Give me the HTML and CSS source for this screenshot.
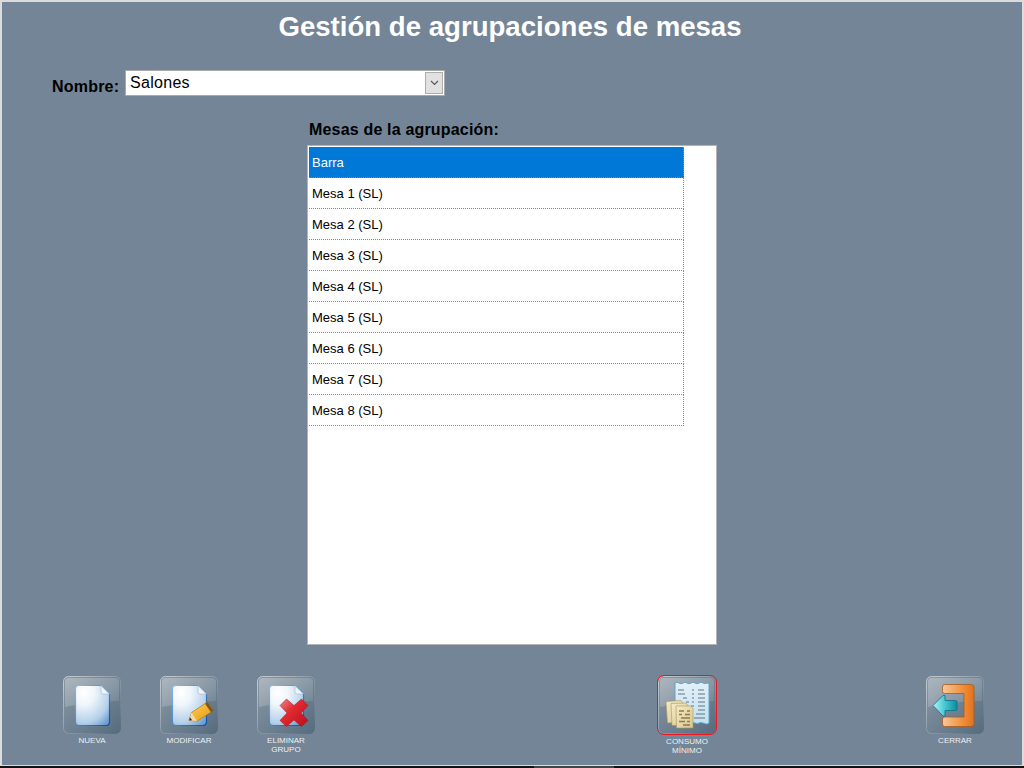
FILE: index.html
```html
<!DOCTYPE html>
<html lang="es">
<head>
<meta charset="utf-8">
<title>Gestión de agrupaciones de mesas</title>
<link rel="stylesheet" href="styles.css">
</head>
<body>
<svg class="defs" aria-hidden="true">
  <defs>
    <linearGradient id="baseG" x1="0" y1="0" x2="1" y2="1">
      <stop offset="0" stop-color="#8b98a3"/><stop offset=".6" stop-color="#6b7f90"/><stop offset="1" stop-color="#566c7e"/>
    </linearGradient>
    <linearGradient id="glossG" x1="0" y1="0" x2="1" y2="1">
      <stop offset="0" stop-color="#fff" stop-opacity=".3"/><stop offset="1" stop-color="#fff" stop-opacity=".08"/>
    </linearGradient>
    <linearGradient id="edgeG" x1="0" y1="0" x2="1" y2="1">
      <stop offset="0" stop-color="#c6ced4"/><stop offset=".55" stop-color="#8796a3"/><stop offset="1" stop-color="#56697a"/>
    </linearGradient>
    <radialGradient id="docG" cx=".25" cy=".18" r="1">
      <stop offset="0" stop-color="#fff"/><stop offset=".3" stop-color="#f0f6fb"/><stop offset=".75" stop-color="#b5d0ea"/><stop offset="1" stop-color="#6c9dd2"/>
    </radialGradient>
    <linearGradient id="docS" x1="0" y1="0" x2="1" y2="1">
      <stop offset="0" stop-color="#8fbbe6"/><stop offset="1" stop-color="#0f4fa0"/>
    </linearGradient>
    <linearGradient id="pencilG" x1="0" y1="0" x2="1" y2="1">
      <stop offset="0" stop-color="#fdd55a"/><stop offset="1" stop-color="#ea9410"/>
    </linearGradient>
    <linearGradient id="redG" x1="0" y1="0" x2="1" y2="1">
      <stop offset="0" stop-color="#f0858a"/><stop offset=".4" stop-color="#e02a30"/><stop offset="1" stop-color="#b90f18"/>
    </linearGradient>
    <linearGradient id="orangeG" x1="0" y1="0" x2="1" y2="0">
      <stop offset="0" stop-color="#f7c79b"/><stop offset=".6" stop-color="#f0933f"/><stop offset="1" stop-color="#e4701c"/>
    </linearGradient>
    <linearGradient id="arrowG" x1="0" y1="0" x2="1" y2="0">
      <stop offset="0" stop-color="#b2f3f7"/><stop offset=".5" stop-color="#45c6d2"/><stop offset="1" stop-color="#0d8c9c"/>
    </linearGradient>
    <linearGradient id="receiptG" x1="0" y1="0" x2="0" y2="1">
      <stop offset="0" stop-color="#e2f0f9"/><stop offset="1" stop-color="#c2e0f0"/>
    </linearGradient>
    <linearGradient id="paperG" x1="0" y1="0" x2="1" y2="1">
      <stop offset="0" stop-color="#f5ebc8"/><stop offset="1" stop-color="#d9c48c"/>
    </linearGradient>
    <symbol id="base" viewBox="0 0 58 58">
      <rect x=".5" y=".5" width="57" height="57" rx="5" fill="url(#baseG)" stroke="url(#edgeG)"/>
      <path d="M2 29V6a4 4 0 0 1 4-4h46a4 4 0 0 1 4 4v19Q28 25 2 31z" fill="url(#glossG)"/>
    </symbol>
    <symbol id="doc" viewBox="0 0 58 58">
      <path d="M16 9.500H38L46.500 18V46a3.500 3.500 0 0 1-3.500 3.500H16a3.500 3.500 0 0 1-3.500-3.500V13A3.500 3.500 0 0 1 16 9.500z" fill="url(#docG)" stroke="url(#docS)" stroke-width="1.200"/>
      <path d="M38 9.500V16a2 2 0 0 0 2 2h6.500z" fill="#eef4f8" stroke="#9fb9d0" stroke-width=".6"/>
    </symbol>
  </defs>
</svg>

<main class="frame">
  <h1 class="title">Gestión de agrupaciones de mesas</h1>

  <div class="name-row">
    <label class="name-label">Nombre:</label>
    <div class="select">
      <span class="select-value">Salones</span>
      <span class="select-arrow">
        <svg width="9" height="6" viewBox="0 0 9 6"><path d="M1 1l3.500 3.500L8 1" fill="none" stroke="#555" stroke-width="1.100"/></svg>
      </span>
    </div>
  </div>

  <section class="tables">
    <h2 class="tables-title">Mesas de la agrupación:</h2>
    <ul class="list">
      <li class="item selected">Barra</li>
      <li class="item">Mesa 1 (SL)</li>
      <li class="item">Mesa 2 (SL)</li>
      <li class="item">Mesa 3 (SL)</li>
      <li class="item">Mesa 4 (SL)</li>
      <li class="item">Mesa 5 (SL)</li>
      <li class="item">Mesa 6 (SL)</li>
      <li class="item">Mesa 7 (SL)</li>
      <li class="item">Mesa 8 (SL)</li>
    </ul>
  </section>

  <div class="actions">
    <div class="action">
      <svg class="btn" viewBox="0 0 58 58"><use href="#base"/><use href="#doc"/></svg>
      <span class="action-label">NUEVA</span>
    </div>
    <div class="action">
      <svg class="btn" viewBox="0 0 58 58"><use href="#base"/><use href="#doc"/>
        <path d="M29 44.500l2.500-8L47.500 26l6 8.500-16 10.500z" fill="url(#pencilG)" stroke="#a8690a" stroke-width=".6"/>
        <path d="M47.500 26l6 8.500-2.500 1.700-6-8.500z" fill="#7a5a20"/>
        <path d="M29 44.500l2.500-8 5.500 8.500z" fill="#f4d9a8"/>
        <path d="M29 44.500l1-3.200 2.200 3z" fill="#333"/>
      </svg>
      <span class="action-label">MODIFICAR</span>
    </div>
    <div class="action">
      <svg class="btn" viewBox="0 0 58 58"><use href="#base"/><use href="#doc"/>
        <path d="M29.500 23l7.500 6.500 7.500-6.500 6.500 6.500-7 7.500 7 7.500-6.500 6-7.500-6.500-7.500 6.500-6.500-6 7-7.500-7-7.500z" fill="url(#redG)" stroke="#a50d15" stroke-width=".5"/>
      </svg>
      <span class="action-label">ELIMINAR<br>GRUPO</span>
    </div>
    <div class="action action-consumo">
      <svg class="btn btn-active" viewBox="0 0 58 58"><use href="#base"/>
        <path d="M17 7q2-1.500 4 0t4 0 4 0 4 0 4 0 4 0 4 0 4 0q1 0 2 1V47q-1 1-2 1t-4-1-4 0-4 0-4 0-4 0-4 0-4 0q-2 1-4 0z" fill="url(#receiptG)" stroke="#5fa6cc" stroke-width="1"/>
        <g stroke="#5a6672" stroke-width=".9" fill="none">
          <path d="M20 14h6M34 14h2M40 14h6M20 18h7M34 18h2M40 18h7M25 22h4M34 22h2M40 22h7M28 26h3M34 26h2M40 26h7M33 30h3M40 30h7M40 34h7M38 38h9M36 42h11"/>
        </g>
        <path d="M8 25.500L23 24.500l2 2.500 1 19-16.500 1z" fill="url(#paperG)" stroke="#a7945f" stroke-width=".6"/>
        <path d="M13 27.500L28 27l2 2.500 .5 19-16.500 1z" fill="url(#paperG)" stroke="#a7945f" stroke-width=".6"/>
        <path d="M18 30L33 30l2 2.500V52H18.500z" fill="url(#paperG)" stroke="#a7945f" stroke-width=".6"/>
        <g stroke="#8d7d4c" stroke-width="1.300" fill="none">
          <path d="M21 35h5M29 35h3M21 38.500h3M27 38.500h5M23 42h9M21 45.500h6M29 45.500h3M25 49h7"/>
        </g>
      </svg>
      <span class="action-label">CONSUMO<br>MÍNIMO</span>
    </div>
    <div class="action action-cerrar">
      <svg class="btn" viewBox="0 0 58 58"><use href="#base"/>
        <path d="M18.500 8.500H45a3 3 0 0 1 3 3V47.500a3 3 0 0 1-3 3H18.500a2.500 2.500 0 0 1-2-2.500V43a2 2 0 0 1 2-2H38V17.500H18.500a2 2 0 0 1-2-2V11a2.500 2.500 0 0 1 2-2.500z" fill="url(#orangeG)" stroke="#a85a1a" stroke-width=".8"/>
        <path d="M7 29.500L17 19.500H19V24.500H29.500a1.500 1.500 0 0 1 1.500 1.500V33a1.500 1.500 0 0 1-1.500 1.500H19V40H17z" fill="url(#arrowG)" stroke="#0f6f88" stroke-width=".8"/>
      </svg>
      <span class="action-label">CERRAR</span>
    </div>
  </div>
</main>
<div class="strip"><span class="strip-tab"></span></div>
</body>
</html>
```

FILE: styles.css
```css
* { box-sizing: border-box; }
html, body { margin: 0; padding: 0; }
body {
  width: 1024px;
  height: 768px;
  overflow: hidden;
  background: #111;
  font-family: "Liberation Sans", Arial, sans-serif;
}
.defs { position: absolute; width: 0; height: 0; }
.frame {
  height: 766px;
  background: #738596;
  border: 2px solid #dcdcdc;
  border-bottom-width: 1px;
  padding-top: 9px;
  display: flex;
  flex-direction: column;
}
.title {
  margin: 0;
  padding-right: 4px;
  height: 32px;
  line-height: 32px;
  text-align: center;
  font-size: 27.6px;
  font-weight: bold;
  color: #fff;
}
.name-row {
  margin: 27px 0 0 50px;
  display: flex;
  align-items: flex-start;
}
.name-label {
  width: 73px;
  flex-shrink: 0;
  margin-top: 8px;
  font-size: 16px;
  font-weight: bold;
  color: #000;
  line-height: 18px;
  letter-spacing: .2px;
}
.select {
  width: 320px;
  height: 26px;
  display: flex;
  background: #fff;
  border: 1px solid #a9a9a9;
  font-size: 16px;
}
.select-value {
  flex: 1;
  padding: 1px 0 0 4px;
  line-height: 22px;
  color: #000;
  letter-spacing: .3px;
}
.select-arrow {
  width: 18px;
  margin: 1px;
  background: #e1e1e1;
  border: 1px solid #adadad;
  display: flex;
  align-items: center;
  justify-content: center;
}
.tables {
  margin: 24px 0 0 305px;
  width: 410px;
}
.tables-title {
  margin: 0 0 5px 2px;
  font-size: 16px;
  line-height: 20px;
  font-weight: bold;
  color: #000;
  letter-spacing: .18px;
}
.list {
  list-style: none;
  margin: 0;
  padding: 1px;
  height: 500px;
  background: #fff;
  border: 1px solid #b4b4b4;
}
.item {
  width: 375px;
  height: 31px;
  padding: 0 0 0 3px;
  line-height: 31px;
  font-size: 13px;
  color: #000;
  border-right: 1px dotted #888;
  border-bottom: 1px dotted #888;
}
.selected { background: #0078d7; color: #fff; }
.actions {
  margin: 31px 0 0 45px;
  display: flex;
  align-items: flex-start;
}
.action {
  width: 90px;
  margin-right: 7px;
  display: flex;
  flex-direction: column;
  align-items: center;
}
.action-consumo { margin-left: 304px; margin-right: 178px; }
.btn { width: 58px; height: 58px; display: block; }
.btn-active { border-radius: 6px; outline: 1px solid #f0141c; }
.action-label {
  margin-top: 2px;
  font-size: 8px;
  line-height: 9px;
  text-align: center;
  color: #eef1f4;
}
.action-consumo .action-label { margin-top: 3px; }
.strip { height: 2px; background: #111; padding-left: 534px; display: flex; }
.strip-tab { width: 80px; background: #444; }
```
